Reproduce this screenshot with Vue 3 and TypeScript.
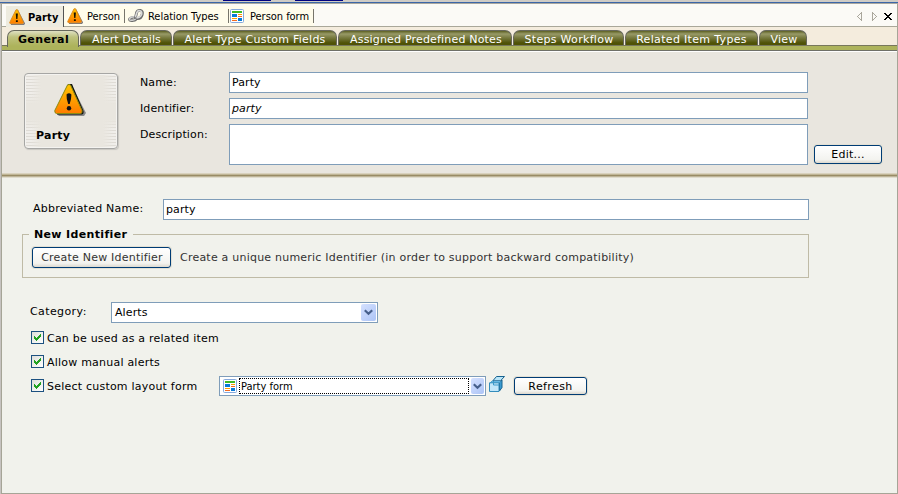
<script setup lang="ts">
import { ref } from 'vue'

interface DocTab { label: string; icon: 'alert' | 'link' | 'form'; cls: string }

const docTabs: DocTab[] = [
  { label: 'Party', icon: 'alert', cls: 'd1' },
  { label: 'Person', icon: 'alert', cls: 'd2' },
  { label: 'Relation Types', icon: 'link', cls: 'd3' },
  { label: 'Person form', icon: 'form', cls: 'd4' },
]
const sections = [
  { label: 'General', cls: 's1' },
  { label: 'Alert Details', cls: 's2' },
  { label: 'Alert Type Custom Fields', cls: 's3' },
  { label: 'Assigned Predefined Notes', cls: 's4' },
  { label: 'Steps Workflow', cls: 's5' },
  { label: 'Related Item Types', cls: 's6' },
  { label: 'View', cls: 's7' },
]
const activeDoc = ref(0)
const activeSection = ref(0)
const options = ref([
  { label: 'Can be used as a related item', on: true },
  { label: 'Allow manual alerts', on: true },
  { label: 'Select custom layout form', on: true },
])
</script>

<template>
  <div class="window">
    <svg class="defs" width="0" height="0" aria-hidden="true">
      <defs>
        <linearGradient id="amber" x1="0" y1="0" x2="0" y2="1">
          <stop offset="0" stop-color="#ffc400" /><stop offset="1" stop-color="#ff7c00" />
        </linearGradient>
        <symbol id="alert" viewBox="0 0 16 16">
          <path d="M8.5 1.5 15.3 14.5 14.5 15.5H2" fill="none" stroke="#77777f" stroke-width="1.4" />
          <path d="M7 .8H8.6L14.4 13.3Q14.5 14.7 13.4 14.7H1.8Q.5 14.7.8 13.3Z" fill="url(#amber)" stroke="#d98a20" stroke-width=".9" />
          <path d="M6.7 4.6H8.9L8.4 10H7.2ZM6.9 11.2h1.9v1.8H6.9Z" fill="#161200" />
        </symbol>
        <symbol id="link" viewBox="0 0 16 16">
          <g fill="none" stroke-linecap="round">
            <ellipse cx="4.8" cy="11" rx="3.4" ry="1.6" transform="rotate(-12 4.8 11)" stroke="#6b6b6b" stroke-width="2.6" />
            <ellipse cx="4.8" cy="10.6" rx="3.4" ry="1.6" transform="rotate(-12 4.8 10.6)" stroke="#d2d2d2" stroke-width="1.4" />
            <path d="M7.6 9 8.6 4.6Q9.6 2 12.2 2.4 15 3 14.2 6.5 13 10.8 9 10.6" stroke="#6b6b6b" stroke-width="2.9" />
            <path d="M7.6 8.6 8.8 4.6Q9.7 2.3 12 2.7 14.2 3.2 13.7 6.3 12.4 9.8 9 9.9" stroke="#d9d9d9" stroke-width="1.6" />
          </g>
        </symbol>
        <symbol id="form" viewBox="0 0 14 14">
          <rect x=".5" y=".5" width="13" height="13" rx="1" fill="#fff" stroke="#86a9dc" />
          <path d="M2 2h10v2H2z" fill="#40b928" />
          <path d="M2 5h5v3H2zM8 9h4v3H8z" fill="#087ad8" />
          <path d="M8 5h4v1H8zM2 9h5v1H2z" fill="#ff9d00" />
          <path d="M8 7h4v1H8zM2 11h5v1H2z" fill="#f36b20" />
        </symbol>
      </defs>
    </svg>

    <div class="chrome"><i class="frag"></i><i class="frag"></i></div>
    <div class="panel">
      <nav class="docs">
        <button v-for="(t, i) in docTabs" :key="t.label" class="doc" :class="[t.cls, { active: i === activeDoc }]" @click="activeDoc = i">
          <svg class="doc-icon" :class="t.icon"><use :href="'#' + t.icon" /></svg>
          <span>{{ t.label }}</span>
        </button>
        <svg class="nav-icons" width="38" height="13" viewBox="0 0 38 13" shape-rendering="crispEdges">
          <path d="M5.5 2.5v8L1.5 6.5ZM16.5 2.5v8l4-4Z" fill="none" stroke="#aaa79c" />
          <path d="M28 3h2v1h1v1h2V4h1V3h2v1h-1v1h-1v1h-1v1h1v1h1v1h1v1h-2V9h-1V8h-2v1h-1v1h-2V9h1V8h1V7h1V6h-1V5h-1V4h-1Z" fill="#000" />
        </svg>
      </nav>

      <nav class="sections">
        <button v-for="(s, i) in sections" :key="s.label" class="section" :class="[s.cls, { active: i === activeSection }]" @click="activeSection = i">{{ s.label }}</button>
      </nav>
      <div class="green"></div>

      <header class="head">
        <div class="badge-card">
          <svg class="big-alert" width="33" height="34" viewBox="0 0 33 34">
            <path d="M18 2 32 29 30 32H5L3 30Z" fill="#898989" />
            <path d="M14 0H18L29.5 27Q30 30 28 30.5H3Z" fill="#111" />
            <path d="M13.5 1Q15 0 16.5 1L28 26.5Q28.5 29.5 26.5 29.5H2.5Q.3 29 .8 26.5Z" fill="url(#amber)" stroke="#8b8c10" stroke-width="1" />
            <path d="M12.5 10.5Q15 8 17.4 10.5L17 15 15.7 20H14.2L12.8 15Z" fill="#111" /><circle cx="15" cy="24.2" r="2.2" fill="#111" />
          </svg>
          <b>Party</b>
        </div>
        <div class="fields">
          <label>Name:</label><div class="input">Party</div>
          <label>Identifier:</label><div class="input italic">party</div>
          <label class="desc">Description:</label><div class="input area"></div>
        </div>
        <button class="btn edit">Edit...</button>
      </header>

      <main class="body">
        <div class="row abbr"><label>Abbreviated Name:</label><div class="input">party</div></div>
        <fieldset class="group">
          <legend>New Identifier</legend>
          <button class="btn create">Create New Identifier</button>
          <span class="hint">Create a unique numeric Identifier (in order to support backward compatibility)</span>
        </fieldset>
        <div class="row category">
          <label>Category:</label>
          <div class="select"><span>Alerts</span>
            <i class="arrow"><svg width="9" height="7" viewBox="0 0 9 7"><path d="M.8 1.2 4.5 4.8 8.2 1.2" fill="none" stroke="#465f8b" stroke-width="2.2" /></svg></i>
          </div>
        </div>
        <div v-for="(o, i) in options" :key="o.label" class="row check">
          <button class="box" role="checkbox" :aria-checked="o.on" @click="o.on = !o.on">
            <svg v-if="o.on" width="7" height="7" viewBox="0 0 7 7" shape-rendering="crispEdges"><path d="M0 2h1v1h1v1h1V3h1V2h1V1h1V0h1v3H6v1H5v1H4v1H3v1H2V6H1V5H0Z" fill="#21a121" /></svg>
          </button>
          <span class="check-label">{{ o.label }}</span>
          <template v-if="i === 2">
            <div class="select form-select">
              <svg class="form-icon" width="14" height="14"><use href="#form" /></svg>
              <span class="focus">Party form</span>
              <i class="arrow"><svg width="9" height="7" viewBox="0 0 9 7"><path d="M.8 1.2 4.5 4.8 8.2 1.2" fill="none" stroke="#465f8b" stroke-width="2.2" /></svg></i>
            </div>
            <svg class="cube" width="17" height="17" viewBox="0 0 17 17">
              <path d="M10.5 6.5 13 4V11.5L10.5 15Z" fill="#3a9bd0" stroke="#17628f" />
              <path d="M7.5.5H15.5L11.5 4.8H3.8Z" fill="#b9e5f8" stroke="#17628f" />
              <path d="M3.5 5H12L10 7H1Z" fill="#63b7e3" />
              <path d="M.5 6.8H10V15.5H.5Z" fill="#c3e7fa" stroke="#348dbc" />
              <path d="M3.5 4.8 1 7M4.5 5V9H10" fill="none" stroke="#3d9acb" />
            </svg>
            <button class="btn refresh">Refresh</button>
          </template>
        </div>
      </main>
    </div>
  </div>
</template>

<style>
body { margin: 0; overflow: hidden; }
</style>
<style scoped>
* { box-sizing: border-box; }
button { margin: 0; padding: 0; border: 0; font: inherit; color: inherit; letter-spacing: inherit; white-space: nowrap; }
.window { width: 898px; height: 494px; background: #c6c3c0; font: 11px/14px "DejaVu Sans", Verdana, sans-serif; color: #000; letter-spacing: .22px; white-space: nowrap; overflow: hidden; }
.defs { display: block; height: 0; }
.chrome { height: 4px; display: flex; gap: 24px; padding-left: 223px; background: #cfccc6; border-bottom: 1px solid #a9a79f; box-shadow: inset 0 -1px #3b66a8; }
.frag { width: 48px; height: 1px; background: #000080; }
.panel { height: 490px; display: flex; flex-direction: column; margin-left: 1px; border: 1px solid #a6a597; border-top: 0; background: #f1f2ec; }
.docs { height: 23px; flex: none; display: flex; align-items: flex-end; padding-left: 4px; background: #fbfaf6; border-bottom: 1px solid #a9a799; font-family: "DejaVu Sans Condensed", "DejaVu Sans", Tahoma, sans-serif; letter-spacing: -.03px; }
.doc { position: relative; height: 20px; display: flex; align-items: center; background: #fffceb; }
.doc span { padding-top: 2px; }
.doc::after { content: ""; position: absolute; right: 0; top: 3px; width: 1px; height: 14px; background: #77756b; }
.doc.active { background: #edebdf; height: 21px; margin-bottom: -1px; font-weight: bold; }
.doc.active::after { top: 0; height: 21px; background: #555; }
.doc-icon { width: 16px; height: 16px; flex: none; }
.doc-icon.form { width: 14px; height: 14px; }
.d1 { width: 58px; padding-left: 3px; gap: 3px; letter-spacing: .2px; }
.d2 { width: 61px; padding-left: 3px; gap: 4px; }
.d3 { width: 104px; padding-left: 3px; gap: 4px; }
.d4 { width: 85px; padding-left: 1px; gap: 6px; }
.nav-icons { margin: 0 3px 3px auto; }
.sections { height: 18px; flex: none; padding: 3px 0 0 5px; display: flex; gap: 1px; background: #f4ecdd; color: #fff; }
.section { height: 16px; border: 1px solid #67685c; border-bottom: 0; border-radius: 7px 7px 0 0; background: linear-gradient(#5d6023, #989a67 3px, #75783c 7px, #4f5206 12px); line-height: 17px; }
.section.active { background: linear-gradient(#dfe0c2, #bec27e 6px, #adb35b 15px); color: #000; font-weight: bold; height: 17px; z-index: 1; }
.s1 { width: 72px; letter-spacing: .4px; padding-left: 1px; }
.s2 { width: 92px; letter-spacing: .08px; padding-left: 1px; }
.s3 { width: 164px; letter-spacing: .25px; }
.s4 { width: 174px; letter-spacing: .18px; padding-left: 2px; }
.s5 { width: 111px; letter-spacing: .3px; padding-left: 1px; }
.s6 { width: 133px; letter-spacing: .33px; }
.s7 { width: 48px; letter-spacing: .25px; padding-left: 2px; }
.green { height: 7px; flex: none; background: #adb35b; border-top: 1px solid #77775c; border-bottom: 1px solid #fff; box-shadow: inset 0 -1px #6f7068; }
.head { height: 126px; flex: none; display: flex; padding: 20px 14px 0 22px; background: linear-gradient(#d9d2be 0 1px, #bfb596 1px 2px, #998c65 2px 3px, #bdb498 3px 4px, #e0dccd 4px 5px) left bottom / 100% 5px no-repeat, #e9e6df; }
.badge-card { width: 94px; height: 76px; margin: 1px 1px 0 0; border: 1px solid #a6a6a4; border-radius: 4px; box-shadow: inset 0 0 0 1px #f4f3f0, 1px 1px 1px #c9c7c1; background: linear-gradient(transparent 20px, #e9e6df 30px 45px, transparent 55px), linear-gradient(90deg, transparent 6px, #e9e6df 16px 78px, transparent 88px), repeating-linear-gradient(#f0eeea 0 2px, #dedbd5 2px 3px); padding: 10px 0 0 11px; display: flex; flex-direction: column; }
.big-alert { margin-left: 18px; }
.badge-card b { margin-top: 11px; letter-spacing: .25px; }
.fields { margin-left: 21px; display: grid; grid-template-columns: 89px 579px; grid-template-rows: 21px 21px 41px; row-gap: 5px; }
.fields label { padding-top: 4px; letter-spacing: .12px; }
.input { height: 21px; border: 1px solid #7f9db9; background: #fff; padding: 2px 0 0 2px; letter-spacing: .1px; line-height: 15px; }
.italic { font-style: italic; }
.area { height: 41px; }
.btn { height: 19px; border: 1px solid #003c74; border-radius: 3px; background: linear-gradient(#fff, #f3f3ef 80%, #dcd8ce); box-shadow: 0 0 0 1px #e3e0d4; text-align: center; }
.edit { width: 68px; margin: 73px 0 0 6px; }
.body { flex: 1; padding: 21px 0 0 20px; }
.row { display: flex; }
.abbr { height: 21px; padding-left: 11px; }
.abbr label { width: 130px; padding-top: 3px; }
.abbr .input { width: 646px; }
.group { width: 787px; height: 51px; margin: 7px 0 0; border: 1px solid #bfbba6; padding: 6px 0 0 9px; display: flex; color: #333; }
.group legend { padding: 0 6px 0 5px; height: 14px; line-height: 16px; margin-left: -3px; color: #000; font-weight: bold; letter-spacing: .35px; }
.create { width: 139px; height: 21px; padding-left: 1px; }
.hint { margin: 4px 0 0 9px; }
.category { margin-top: 24px; padding-left: 8px; height: 21px; }
.category label { width: 81px; padding-top: 3px; letter-spacing: .4px; }
.select { width: 267px; height: 21px; border: 1px solid #7f9db9; background: #fff; display: flex; align-items: center; padding: 0 1px 0 3px; letter-spacing: .1px; }
.select > span { padding-top: 1px; }
.arrow { width: 15px; height: 17px; margin-left: auto; border-radius: 2px; background: linear-gradient(135deg, #d5e1ff, #acc4f6); display: flex; align-items: center; justify-content: center; }
.check { height: 20px; margin-top: 4px; padding-left: 9px; align-items: center; }
.category + .check { margin-top: 5px; }
.box { width: 13px; height: 13px; flex: none; margin-top: -1px; border: 1px solid #1c5180; background: linear-gradient(135deg, #dedfd9, #fff); display: flex; align-items: center; justify-content: center; }
.check-label { margin-left: 3px; width: 172px; padding-top: 1px; }
.form-select { height: 20px; font-family: "DejaVu Sans Condensed", "DejaVu Sans", sans-serif; letter-spacing: 0; flex: none; }
.form-icon { flex: none; margin-right: 2px; }
.form-select .focus { width: 230px; height: 16px; border: 1px dotted #000; padding: 0 0 0 1px; line-height: 15px; }
.form-select .arrow { width: 13px; height: 16px; }
.cube { margin: -3px 0 0 3px; flex: none; }
.refresh { width: 73px; height: 18px; margin-left: 8px; line-height: 17px; letter-spacing: .4px; }
</style>
